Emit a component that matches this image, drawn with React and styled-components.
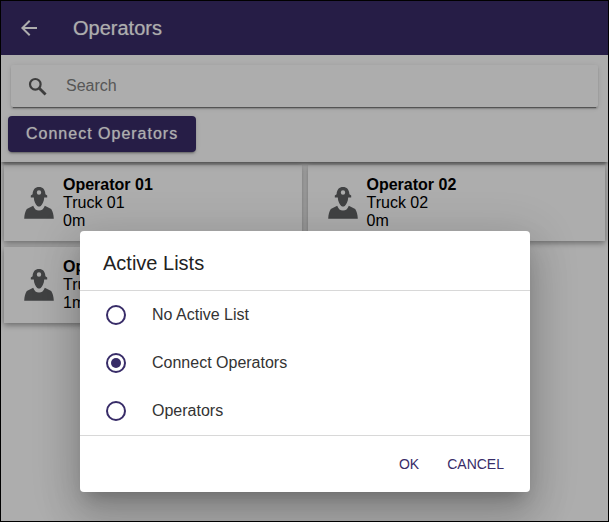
import React, { useState } from "react"
import styled, { createGlobalStyle } from "styled-components"
import { MdArrowBack } from "react-icons/md"

const primary = "#382c68"

const GlobalStyle = createGlobalStyle`
  * {
    box-sizing: border-box;
  }
  body {
    margin: 0;
    font-family: "Liberation Sans", Arial, sans-serif;
    font-size: 16px;
    color: #000;
  }
  button, input {
    font-family: inherit;
  }
`

const Screen = styled.div`
  position: relative;
  min-height: 100vh;
  border: 1px solid #000;
  background: #fff;
  overflow: hidden;
`

const Header = styled.header`
  display: flex;
  align-items: center;
  gap: 24px;
  height: 54px;
  padding: 0 8px;
  background: ${primary};
  color: #fff;
`

const BackButton = styled.button`
  display: flex;
  padding: 8px;
  border: none;
  background: none;
  color: inherit;
  font-size: 24px;
`

const PageTitle = styled.h1`
  margin: 0;
  font-size: 20px;
  font-weight: 500;
  text-shadow: 0 0 1px rgba(255, 255, 255, 0.5);
`

const Toolbar = styled.div`
  position: relative;
  padding: 10px 10px 10px 7px;
  box-shadow: 0 3px 3px -1px rgba(0, 0, 0, 0.45),
    0 5px 6px -1px rgba(0, 0, 0, 0.14);
`

const SearchBar = styled.label`
  display: flex;
  align-items: center;
  gap: 16px;
  height: 42px;
  margin-left: 3px;
  padding: 0 15px;
  border-radius: 2px;
  box-shadow: 0 2px 2px rgba(0, 0, 0, 0.14), 0 3px 1px -2px rgba(0, 0, 0, 0.4),
    0 1px 5px rgba(0, 0, 0, 0.12);
`

const SearchInput = styled.input`
  flex: 1;
  min-width: 0;
  padding: 0;
  border: none;
  outline: none;
  background: none;
  font-size: 16px;
  &::placeholder {
    color: #808080;
    opacity: 1;
  }
`

const ListButton = styled.button`
  display: block;
  height: 36px;
  margin-top: 9px;
  padding: 0 18px;
  border: none;
  border-radius: 4px;
  background: ${primary};
  box-shadow: 0 3px 1px -2px rgba(0, 0, 0, 0.2), 0 2px 2px rgba(0, 0, 0, 0.14),
    0 1px 5px rgba(0, 0, 0, 0.12);
  color: #fff;
  font-size: 16px;
  font-weight: 500;
  letter-spacing: 1px;
  text-shadow: 0 0 1px rgba(255, 255, 255, 0.7);
`

const OperatorGrid = styled.main`
  display: grid;
  grid-template-columns: 1fr 1fr;
  gap: 6px;
  padding: 3px;
`

const OperatorCard = styled.article`
  display: flex;
  align-items: center;
  gap: 9px;
  padding: 11px 20px;
  background: #fff;
  box-shadow: 0 2px 6px rgba(0, 0, 0, 0.4);
  line-height: 18px;
`

const OperatorName = styled.div`
  font-weight: bold;
`

const Backdrop = styled.div`
  position: absolute;
  inset: 0;
  display: flex;
  justify-content: center;
  align-items: flex-start;
  padding: 230px 16px 0 17px;
  background: rgba(0, 0, 0, 0.32);
`

const Dialog = styled.form`
  width: 100%;
  max-width: 450px;
  border-radius: 4px;
  background: #fff;
  box-shadow: 0 11px 15px -7px rgba(0, 0, 0, 0.2),
    0 24px 38px 3px rgba(0, 0, 0, 0.14), 0 9px 46px 8px rgba(0, 0, 0, 0.12);
`

const DialogTitle = styled.h2`
  margin: 0;
  padding: 20px 23px 15px;
  font-size: 20px;
  font-weight: 500;
  line-height: 24px;
  color: #222;
`

const Options = styled.div`
  border: solid #d8d8d8;
  border-width: 1px 0;
`

const Option = styled.label`
  display: flex;
  align-items: center;
  gap: 26px;
  height: 48px;
  padding: 0 26px;
  color: #333;
`

const Radio = styled.input`
  appearance: none;
  width: 20px;
  height: 20px;
  margin: 0;
  border: 2px solid ${primary};
  border-radius: 50%;
  &:checked {
    padding: 3px;
    background: ${primary} content-box;
  }
`

const DialogActions = styled.div`
  display: flex;
  justify-content: flex-end;
  gap: 8px;
  padding: 10px 16px;
`

const DialogButton = styled.button`
  height: 36px;
  padding: 0 10px;
  border: none;
  background: none;
  color: ${primary};
  font-size: 14px;
  font-weight: 500;
  text-transform: uppercase;
`

const SearchIcon = () => (
  <svg width="24" height="24" viewBox="0 0 24 24" fill="none" stroke="#5b5b5b" aria-hidden="true">
    <circle cx="9.300" cy="10.300" r="5.300" strokeWidth="2.200" />
    <path d="M13 14L19.600 20.600" strokeWidth="2.800" />
  </svg>
)

const MinerIcon = () => (
  <svg width="30" height="32" viewBox="0 0 30 32" fill="#606264" aria-hidden="true">
    <path
      fillRule="evenodd"
      d="M15 0C11.200 0 8.800 2.600 8.600 7.200L6.800 8.600V10.400H9.800C9.900 14.200 11.600 17.200 13.200 18.900Q15 20 16.800 18.900C18.400 17.200 20.100 14.200 20.200 10.400H23.200V8.600L21.400 7.200C21.200 2.600 18.800 0 15 0ZM15 3.300A2.200 2.200 0 1 1 15 7.700A2.200 2.200 0 0 1 15 3.300Z"
    />
    <path d="M9.200 18.700L2.800 22.100C1.200 24.400 .4 27.800 .2 31.700H29.800C29.600 27.800 28.800 24.400 27.200 22.100L20.800 18.700C19.700 21.900 17.800 23.600 15 23.600S10.300 21.900 9.200 18.700Z" />
  </svg>
)

const operators = [
  { name: "Operator 01", truck: "Truck 01", distance: "0m" },
  { name: "Operator 02", truck: "Truck 02", distance: "0m" },
  { name: "Operator 03", truck: "Truck 03", distance: "1m" },
]

const lists = ["No Active List", "Connect Operators", "Operators"]

const App = () => {
  const [active, setActive] = useState("Connect Operators")

  return (
    <>
      <GlobalStyle />
      <Screen>
        <Header>
          <BackButton aria-label="Back">
            <MdArrowBack />
          </BackButton>
          <PageTitle>Operators</PageTitle>
        </Header>
        <Toolbar>
          <SearchBar>
            <SearchIcon />
            <SearchInput type="text" placeholder="Search" aria-label="Search" />
          </SearchBar>
          <ListButton>Connect Operators</ListButton>
        </Toolbar>
        <OperatorGrid>
          {operators.map(({ name, truck, distance }) => (
            <OperatorCard key={name}>
              <MinerIcon />
              <div>
                <OperatorName>{name}</OperatorName>
                <div>{truck}</div>
                <div>{distance}</div>
              </div>
            </OperatorCard>
          ))}
        </OperatorGrid>
        <Backdrop>
          <Dialog role="dialog" aria-labelledby="lists-title">
            <DialogTitle id="lists-title">Active Lists</DialogTitle>
            <Options>
              {lists.map(list => (
                <Option key={list}>
                  <Radio
                    type="radio"
                    name="list"
                    checked={active === list}
                    onChange={() => setActive(list)}
                  />
                  {list}
                </Option>
              ))}
            </Options>
            <DialogActions>
              <DialogButton type="button">Ok</DialogButton>
              <DialogButton type="button">Cancel</DialogButton>
            </DialogActions>
          </Dialog>
        </Backdrop>
      </Screen>
    </>
  )
}

export default App
